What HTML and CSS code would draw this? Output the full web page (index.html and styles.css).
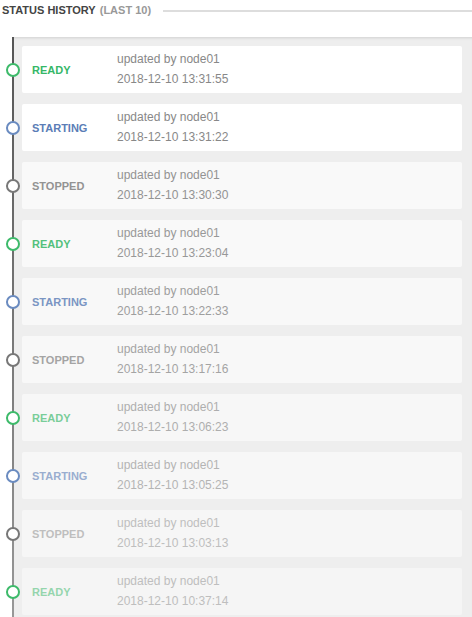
FILE: index.html
```html
<!DOCTYPE html>
<html>
<head>
<meta charset="utf-8">
<link rel="stylesheet" href="styles.css">
</head>
<body>
<div class="panel">
  <div class="head">
    <span class="title">STATUS HISTORY</span>
    <span class="sub">(LAST 10)</span>
    <span class="rule"></span>
  </div>
  <div class="timeline">
    <div class="item ready"><span class="dot"></span><div class="fade"><span class="label">READY</span><div class="meta"><div>updated by node01</div><div>2018-12-10 13:31:55</div></div></div></div>
    <div class="item starting"><span class="dot"></span><div class="fade"><span class="label">STARTING</span><div class="meta"><div>updated by node01</div><div>2018-12-10 13:31:22</div></div></div></div>
    <div class="item stopped"><span class="dot"></span><div class="fade"><span class="label">STOPPED</span><div class="meta"><div>updated by node01</div><div>2018-12-10 13:30:30</div></div></div></div>
    <div class="item ready"><span class="dot"></span><div class="fade"><span class="label">READY</span><div class="meta"><div>updated by node01</div><div>2018-12-10 13:23:04</div></div></div></div>
    <div class="item starting"><span class="dot"></span><div class="fade"><span class="label">STARTING</span><div class="meta"><div>updated by node01</div><div>2018-12-10 13:22:33</div></div></div></div>
    <div class="item stopped"><span class="dot"></span><div class="fade"><span class="label">STOPPED</span><div class="meta"><div>updated by node01</div><div>2018-12-10 13:17:16</div></div></div></div>
    <div class="item ready"><span class="dot"></span><div class="fade"><span class="label">READY</span><div class="meta"><div>updated by node01</div><div>2018-12-10 13:06:23</div></div></div></div>
    <div class="item starting"><span class="dot"></span><div class="fade"><span class="label">STARTING</span><div class="meta"><div>updated by node01</div><div>2018-12-10 13:05:25</div></div></div></div>
    <div class="item stopped"><span class="dot"></span><div class="fade"><span class="label">STOPPED</span><div class="meta"><div>updated by node01</div><div>2018-12-10 13:03:13</div></div></div></div>
    <div class="item ready"><span class="dot"></span><div class="fade"><span class="label">READY</span><div class="meta"><div>updated by node01</div><div>2018-12-10 10:37:14</div></div></div></div>
  </div>
</div>
</body>
</html>
```
FILE: styles.css
```css
html, body {
  margin: 0;
  padding: 0;
  background: #fff;
  font-family: "Liberation Sans", Arial, sans-serif;
  height: 617px;
  overflow: hidden;
}
.panel {
  display: flex;
  flex-direction: column;
}
.head {
  display: flex;
  align-items: center;
  height: 20px;
  padding-left: 2px;
  font-size: 11px;
  font-weight: bold;
  margin-bottom: 17px;
}
.title { color: #444; }
.sub { color: #999; margin-left: 4px; }
.rule {
  flex: 1;
  height: 2px;
  background: #ddd;
  margin-left: 12px;
  margin-top: 1px;
}
.timeline {
  margin-left: 12px;
  padding: 9px 10px 20px 8px;
  background: #eee;
  border-left: 2px solid transparent;
  border-image: linear-gradient(#555, #9a9a9a) 1;
  box-shadow: inset 0 3px 3px -2px rgba(0,0,0,0.12);
  display: flex;
  flex-direction: column;
  gap: 11px;
}
.item {
  position: relative;
  height: 47px;
  background: #fff;
  border-radius: 2px;
}
.fade {
  display: flex;
  align-items: center;
  height: 100%;
  padding-left: 10px;
}
.label {
  width: 85px;
  font-size: 11px;
  font-weight: bold;
  margin-top: 0;
}
.meta {
  font-size: 12px;
  line-height: 20px;
  color: #888;
  margin-top: -1px;
}
.dot {
  position: absolute;
  left: -16px;
  top: 17px;
  width: 10px;
  height: 10px;
  border-radius: 50%;
  border: 2px solid #777;
  background: #fff;
}
.ready .label { color: #35b767; }
.ready .dot { border-color: #3dba6a; }
.starting .label { color: #5b7db6; }
.starting .dot { border-color: #6a8bc0; }
.stopped .label { color: #888; }
.stopped .dot { border-color: #777; }

.item:nth-child(3) { background: #f9f9f9; }
.item:nth-child(4) { background: #f9f9f9; }
.item:nth-child(5) { background: #f8f8f8; }
.item:nth-child(6) { background: #f8f8f8; }
.item:nth-child(7) { background: #f7f7f7; }
.item:nth-child(8) { background: #f7f7f7; }
.item:nth-child(9) { background: #f6f6f6; }
.item:nth-child(10) { background: #f5f5f5; }

.item:nth-child(3) .fade { opacity: 0.9; }
.item:nth-child(4) .fade { opacity: 0.85; }
.item:nth-child(5) .fade { opacity: 0.8; }
.item:nth-child(6) .fade { opacity: 0.75; }
.item:nth-child(7) .fade { opacity: 0.65; }
.item:nth-child(8) .fade { opacity: 0.6; }
.item:nth-child(9) .fade { opacity: 0.5; }
.item:nth-child(10) .fade { opacity: 0.5; }
```
